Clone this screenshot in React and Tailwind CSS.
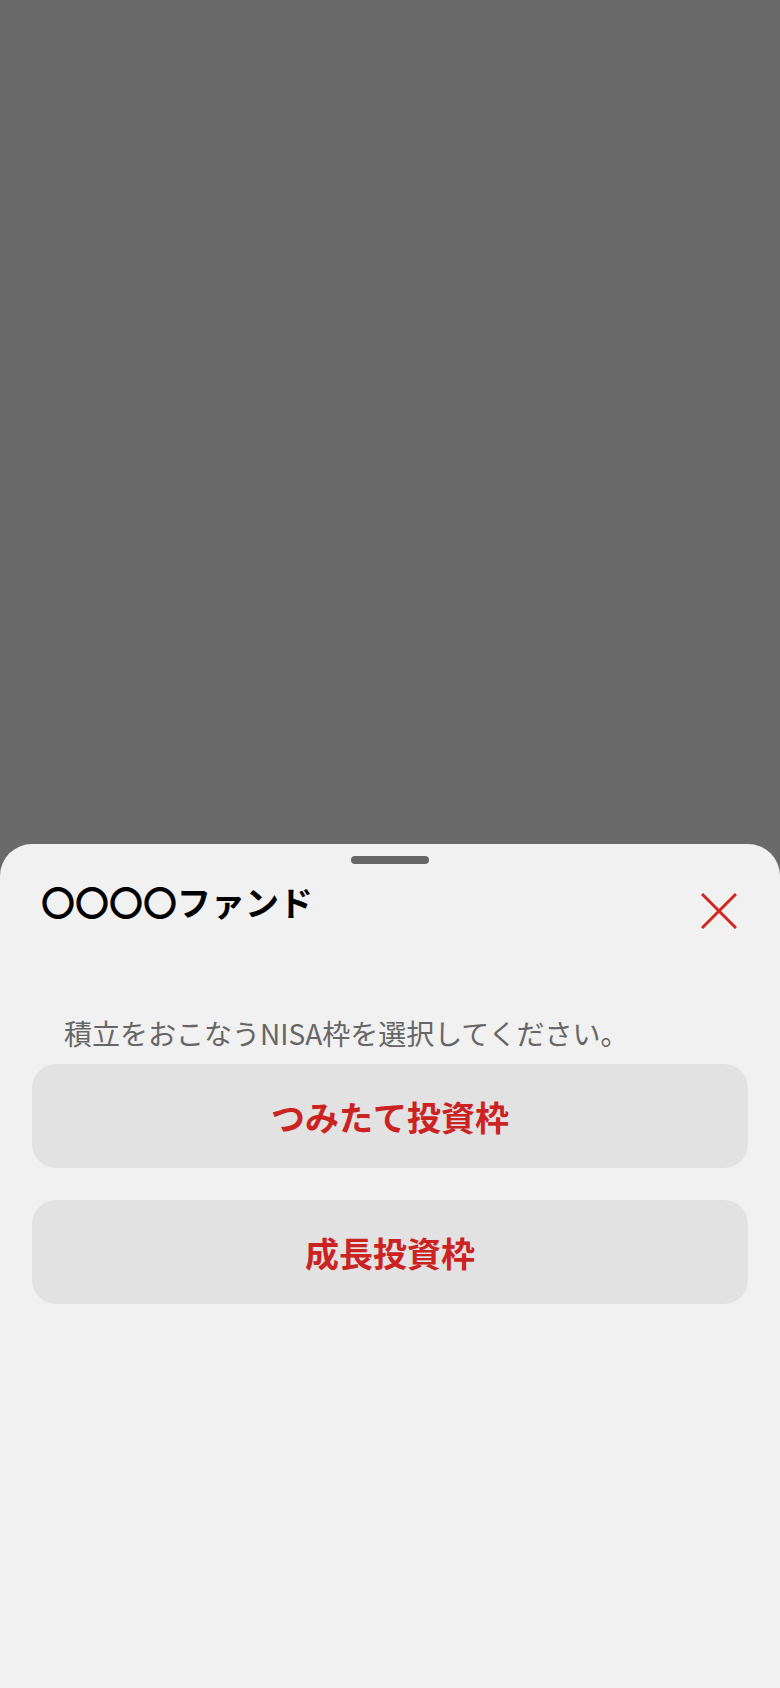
export default function App() {
  const font = { fontFamily: '"Noto Sans CJK JP", "Noto Sans", sans-serif' };

  return (
    <div className="flex h-[1688px] w-full flex-col bg-[#6a6a6a]" style={font}>
      <div className="h-[844px] shrink-0" />
      <div className="flex flex-1 flex-col rounded-t-[32px] bg-[#f1f1f1]">
        <div className="mx-auto mt-3 h-2 w-[78px] rounded-full bg-[#666666]" />

        <div className="mt-[18px] flex items-start justify-between pl-[41px] pr-[43px]">
          <h2 className="text-[34px] font-bold leading-[40px] text-black">〇〇〇〇ファンド</h2>
          <button className="mt-[11px] text-[#d0281f]" aria-label="閉じる">
            <svg width="36" height="36" viewBox="0 0 36 36" fill="none" stroke="currentColor" strokeWidth="3">
              <path d="M1 1L35 35M35 1L1 35" />
            </svg>
          </button>
        </div>

        <p className="mt-[86px] pl-[64px] text-[28px] leading-[36px] text-[#666666]">
          積立をおこなうNISA枠を選択してください。
        </p>

        <div className="mt-[13px] flex flex-col gap-8 px-8">
          <button className="h-[104px] w-full rounded-[24px] bg-[#e2e2e2] text-[34px] font-bold text-[#cc2222]">
            つみたて投資枠
          </button>
          <button className="h-[104px] w-full rounded-[24px] bg-[#e2e2e2] text-[34px] font-bold text-[#cc2222]">
            成長投資枠
          </button>
        </div>
      </div>
    </div>
  );
}
